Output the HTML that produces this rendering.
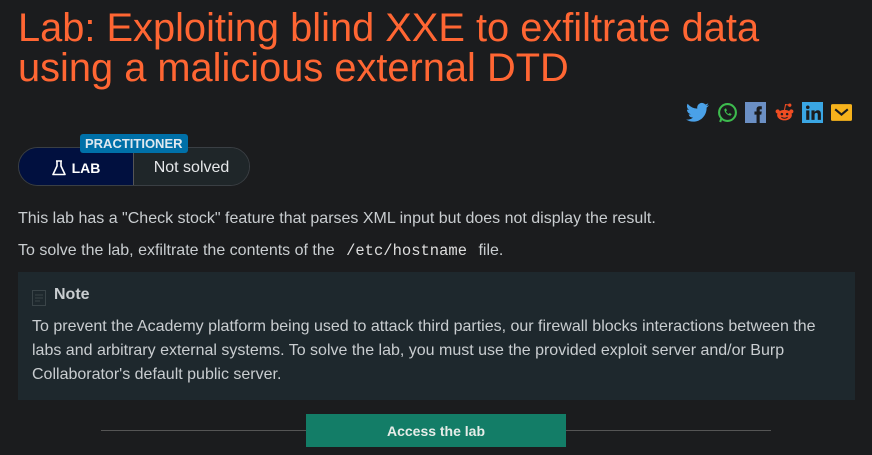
<!DOCTYPE html>
<html><head><meta charset="utf-8"><style>
body{margin:0;background:#1b1c1e;font-family:"Liberation Sans",sans-serif;color:#c9cdd0;width:872px;height:455px;overflow:hidden;position:relative}
h1{position:absolute;left:18px;top:8px;margin:0;font-weight:400;font-size:39.8px;line-height:40px;color:#ff6633;width:800px}
.icons{position:absolute;top:102px;left:686px;display:flex;gap:7.5px}
.badge{position:absolute;left:18px;top:147px;width:230px;height:37px;border:1px solid #3a3f44;border-radius:20px;overflow:hidden;display:flex}
.lab{width:114px;background:#01103f;color:#fff;font-weight:700;font-size:14px;display:flex;align-items:center;justify-content:center;gap:6px;border-right:1px solid #555;padding-top:3px}
.ns{flex:1;background:#1f2629;color:#e6e8ea;font-size:16px;display:flex;align-items:center;justify-content:center;padding-top:3px}
.pr{position:absolute;left:80px;top:134px;background:#0070a8;color:#dfe8ef;font-weight:700;font-size:13px;padding:1px 5px;border-radius:3px;line-height:17px}
p{position:absolute;left:18px;margin:0;font-size:16px}
code{font-family:"Liberation Mono",monospace;font-size:15.5px;color:#ddd;padding:0 7px}
.note{position:absolute;left:18px;top:272px;width:837px;height:128px;background:#1e282d}
.note h4{position:absolute;left:36px;top:14px;margin:0;font-size:16px;color:#c9cdd0}
.note .t{position:absolute;left:14px;top:43px;width:800px;font-size:16px;line-height:24px}
.line{position:absolute;left:101px;top:430px;width:670px;height:1px;background:#555}
.btn{position:absolute;left:306px;top:414px;width:260px;height:33px;background:#137d67;color:#e6ece8;font-weight:700;font-size:14px;display:flex;align-items:center;justify-content:center}
</style></head><body>
<h1>Lab: Exploiting blind XXE to exfiltrate data using a malicious external DTD</h1>
<div class="icons">
<svg width="23" height="21" viewBox="0 0 24 20"><path d="M24 2.3a10 10 0 0 1-2.8.8A5 5 0 0 0 23.3.4a10 10 0 0 1-3.1 1.2A4.9 4.9 0 0 0 11.8 6 14 14 0 0 1 1.7.9a4.9 4.9 0 0 0 1.5 6.6A5 5 0 0 1 1 6.9a4.9 4.9 0 0 0 3.9 4.9 5 5 0 0 1-2.2.1 4.9 4.9 0 0 0 4.6 3.4A9.9 9.9 0 0 1 0 17.3 14 14 0 0 0 7.5 19.5c9 0 14-7.5 14-14v-.6A10 10 0 0 0 24 2.3z" fill="#4aa1e8"/></svg>
<svg width="21" height="21" viewBox="0 0 20 20"><circle cx="10" cy="10" r="8" fill="none" stroke="#3dbb4e" stroke-width="2"/><path d="M3 19l1.5-4" stroke="#3dbb4e" stroke-width="2"/><path d="M7 7c0 3 3 6 6 6l1-1.5-2-1-1 1c-1-.5-2-1.5-2.5-2.5l1-1-1-2z" fill="#3dbb4e"/></svg>
<svg width="21" height="21" viewBox="0 0 20 20"><rect width="20" height="20" fill="#6b8fc4"/><path d="M11 20v-8h-2v-3h2V7c0-2 1-3 3-3h2v3h-1.5c-.5 0-.5.3-.5 1v1h2l-.5 3H14v8z" fill="#1b1c1e"/></svg>
<svg width="21" height="21" viewBox="0 0 20 20"><ellipse cx="10" cy="12.5" rx="7" ry="5" fill="#f04d23"/><circle cx="3.5" cy="9" r="2" fill="#f04d23"/><circle cx="16.5" cy="9" r="2" fill="#f04d23"/><circle cx="15" cy="3" r="1.6" fill="#f04d23"/><path d="M10 7.5L11 2.5 15 3" stroke="#f04d23" fill="none"/><circle cx="7.5" cy="11.5" r="1.2" fill="#1b1c1e"/><circle cx="12.5" cy="11.5" r="1.2" fill="#1b1c1e"/><path d="M7 14.5q3 2 6 0" stroke="#1b1c1e" fill="none"/></svg>
<svg width="21" height="21" viewBox="0 0 20 20"><rect width="20" height="20" fill="#3aa6e4"/><rect x="4" y="8" width="3" height="9" fill="#1b1c1e"/><circle cx="5.5" cy="5" r="1.7" fill="#1b1c1e"/><path d="M9 8h3v1.5c.7-1 1.7-1.7 3-1.7 2 0 3 1.2 3 3.5V17h-3v-5c0-1-.4-1.6-1.3-1.6S12 11 12 12v5H9z" fill="#1b1c1e"/></svg>
<svg width="21" height="21" viewBox="0 0 20 20"><rect y="2" width="20" height="16" rx="1.5" fill="#f6b21c"/><path d="M4 7l6 5 6-5" stroke="#1b1c1e" stroke-width="2" fill="none"/></svg>
</div>
<div class="badge"><div class="lab"><svg width="14" height="16" viewBox="0 0 14 16"><path d="M5 1v5L1 14.5h12L9 6V1M4 1h6" stroke="#fff" stroke-width="1.6" fill="none" stroke-linejoin="round"/></svg>LAB</div><div class="ns">Not solved</div></div>
<div class="pr">PRACTITIONER</div>
<p style="top:210px">This lab has a "Check stock" feature that parses XML input but does not display the result.</p>
<p style="top:242px">To solve the lab, exfiltrate the contents of the <code>/etc/hostname</code> file.</p>
<div class="note">
<svg style="position:absolute;left:14px;top:17px" width="14" height="17" viewBox="0 0 14 17"><rect x="0.5" y="1.5" width="13" height="15" fill="none" stroke="#3a4448"/><path d="M3 6h8M3 9h8M3 12h5" stroke="#3a4448"/></svg>
<h4>Note</h4>
<div class="t">To prevent the Academy platform being used to attack third parties, our firewall blocks interactions between the labs and arbitrary external systems. To solve the lab, you must use the provided exploit server and/or Burp Collaborator's default public server.</div>
</div>
<div class="line"></div>
<div class="btn">Access the lab</div>
</body></html>
